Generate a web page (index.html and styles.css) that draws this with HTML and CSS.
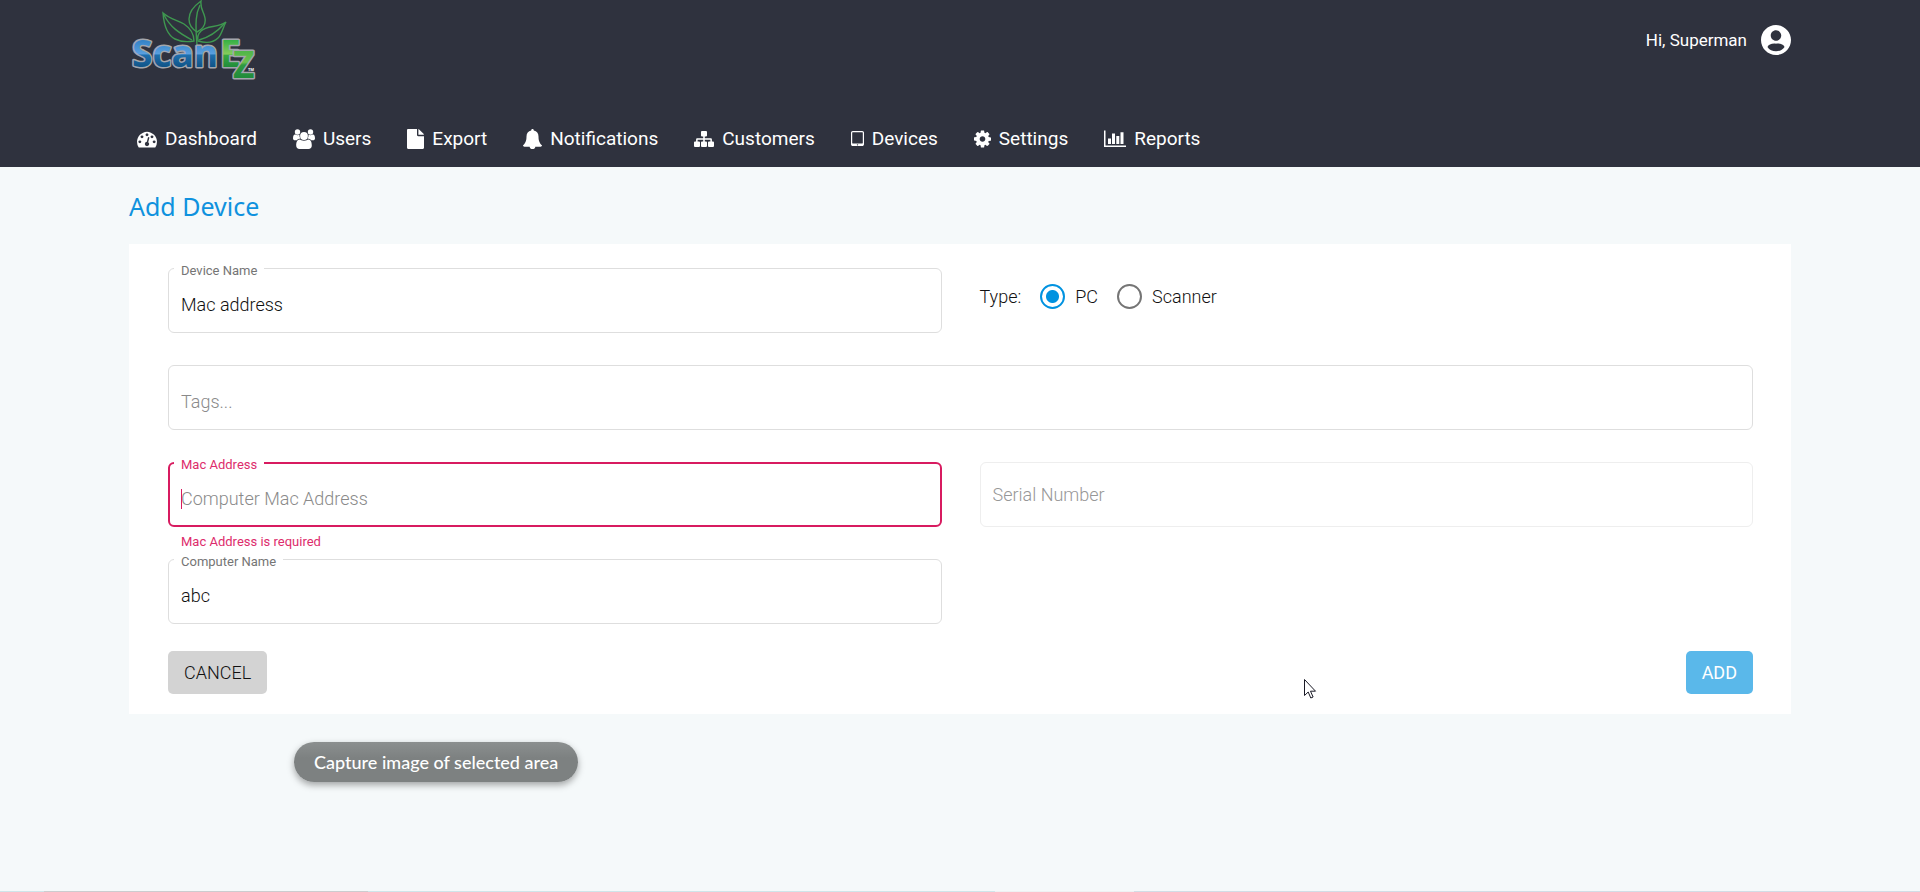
FILE: index.html
```html
<!DOCTYPE html>
<html lang="en">
<head>
<meta charset="utf-8">
<meta name="viewport" content="width=device-width, initial-scale=1">
<title>Add Device</title>
<link rel="stylesheet" href="styles.css">
</head>
<body>
<header class="header">
  <div class="topbar">
    <a class="logo" href="#" aria-label="ScanEz">
      <svg width="180" height="100" viewBox="0 0 180 100">
        <defs>
          <linearGradient id="blue" gradientUnits="userSpaceOnUse" x1="0" y1="39" x2="0" y2="69">
            <stop offset="0" stop-color="#2f7fc4"/><stop offset=".5" stop-color="#5aa0e0"/><stop offset=".53" stop-color="#1f6fae"/><stop offset="1" stop-color="#0d4f80"/>
          </linearGradient>
          <linearGradient id="green" gradientUnits="userSpaceOnUse" x1="0" y1="40" x2="0" y2="68">
            <stop offset="0" stop-color="#35b044"/><stop offset=".5" stop-color="#86cc5c"/><stop offset=".55" stop-color="#37a840"/><stop offset="1" stop-color="#1f8a3a"/>
          </linearGradient>
          <linearGradient id="greenz" gradientUnits="userSpaceOnUse" x1="0" y1="51" x2="0" y2="79">
            <stop offset="0" stop-color="#4fb548"/><stop offset=".4" stop-color="#6cc04e"/><stop offset=".5" stop-color="#2f9a40"/><stop offset="1" stop-color="#1f8a3a"/>
          </linearGradient>
        </defs>
        <g class="leaf">
          <path d="M91 1C84 6 79 12 79 19c0 6 3 10 8 13 6-3 9-8 8-14-1-6-5-9-4-17z"/>
          <path d="M90 5c-4 8-5 17-3 40"/>
          <path d="M53 13c1 13 4 22 12 26 6 3 13 3 19 2 0-8-4-13-10-17-7-4-14-5-21-11z"/>
          <path d="M54 15c6 12 15 18 28 25"/>
          <path d="M116 22c-8 6-19 3-25 9-3 3-4 6-3 10 7 2 15 2 20-3 4-4 5-11 8-16z"/>
          <path d="M114 24c-7 8-14 13-25 16"/>
        </g>
        <g class="word">
          <text class="scan" x="22" y="67">Scan</text>
          <text class="e" x="110" y="67">E</text>
          <text class="z" x="123" y="78">Z</text>
        </g>
        <text class="tm" x="138" y="71">TM</text>
      </svg>
    </a>
    <a class="account" href="#">
      <span>Hi, Superman</span>
      <svg width="36" height="36" viewBox="0 0 24 24" fill="#fff"><path d="M12 2C6.480 2 2 6.480 2 12s4.480 10 10 10 10-4.480 10-10S17.520 2 12 2zm0 3.500c1.930 0 3.500 1.570 3.500 3.500s-1.570 3.500-3.500 3.500S8.500 10.930 8.500 9 10.070 5.500 12 5.500zm0 14c-2.300 0-4.500-1-5.700-2.900.5-1.500 3.200-2.500 5.700-2.100 2.500-.4 5.200.6 5.700 2.100-1.200 1.900-3.400 2.900-5.700 2.900z"/></svg>
    </a>
  </div>
  <nav class="nav">
    <a href="#"><svg width="20" height="20" viewBox="0 0 1792 1792"><path d="M384 1152q0-53-37.500-90.500t-90.500-37.500-90.500 37.500-37.500 90.500 37.500 90.500 90.500 37.500 90.500-37.500 37.500-90.500zm192-448q0-53-37.500-90.500t-90.500-37.500-90.500 37.500-37.500 90.500 37.500 90.500 90.500 37.500 90.500-37.500 37.500-90.500zm428 481l101-382q6-26-7.500-48.500t-38.500-29.500-48 6.500-30 39.500l-101 382q-60 5-107 43.500t-63 98.500q-20 77 20 146t117 89 146-20 89-117q16-60-6-117t-72-91zm660-33q0-53-37.500-90.500t-90.500-37.500-90.500 37.500-37.500 90.500 37.500 90.500 90.500 37.500 90.500-37.500 37.500-90.500zm-640-640q0-53-37.500-90.500t-90.500-37.500-90.500 37.500-37.500 90.500 37.500 90.500 90.500 37.500 90.500-37.500 37.500-90.500zm448 192q0-53-37.500-90.500t-90.500-37.500-90.500 37.500-37.500 90.500 37.500 90.500 90.500 37.500 90.500-37.500 37.500-90.500zm320 448q0 261-141 483-19 29-54 29h-1402q-35 0-54-29-141-221-141-483 0-182 71-348t191-286 286-191 348-71 348 71 286 191 191 286 71 348z"/></svg>Dashboard</a>
    <a href="#"><svg width="22" height="20" viewBox="0 0 22 20"><circle cx="4.500" cy="3" r="2.700"/><circle cx="17.500" cy="3" r="2.700"/><path d="M0 9.500C0 7 .8 5.600 2 5.600c.8 0 1.300.6 2.500.6.8 0 1.400-.2 2-.5-.2 1.500.2 2.700 1 3.800-1.600.1-2.800.7-3.700 1.800H2.200C.8 11.300 0 10.700 0 9.500zM22 9.500c0-2.500-.8-3.900-2-3.900-.8 0-1.300.6-2.500.6-.8 0-1.400-.2-2-.5.2 1.500-.2 2.700-1 3.800 1.600.1 2.800.7 3.700 1.800h1.600c1.400 0 2.200-.6 2.200-1.800z"/><circle cx="11" cy="7" r="3.900"/><path d="M6.600 10.400c1.200 0 2 1.300 4.400 1.300s3.200-1.300 4.400-1.300c2.600 0 3.400 3.200 3.400 6 0 2.300-1.300 3.500-3.300 3.500h-9c-2 0-3.300-1.200-3.300-3.500 0-2.800.8-6 3.400-6z"/></svg>Users</a>
    <a href="#"><svg width="17" height="20" viewBox="0 0 17 20"><path d="M10 0v6c0 .7.500 1.200 1.200 1.200H17v11.600c0 .7-.5 1.200-1.200 1.200H1.200C.5 20 0 19.500 0 18.800V1.200C0 .5.500 0 1.200 0zM11.400.1c.4.100.8.300 1 .6l3.900 3.900c.3.300.5.700.6 1.200h-5.500z"/></svg>Export</a>
    <a href="#"><svg width="19" height="20" viewBox="0 0 19 20"><path d="M9.500 0c.8 0 1.400.6 1.300 1.500 3 .6 4.700 3 4.700 5.900 0 4.800 1.500 7.200 3.500 8.900 0 .8-.6 1.400-1.400 1.400h-5.300c0 1.400-1.200 2.300-2.800 2.300s-2.800-.9-2.800-2.300H1.400C.6 17.700 0 17.100 0 16.300c2-1.700 3.500-4.100 3.500-8.900 0-2.900 1.700-5.300 4.700-5.900C8.100.6 8.700 0 9.500 0z"/></svg>Notifications</a>
    <a href="#"><svg width="20" height="20" viewBox="0 0 20 20"><path d="M7.900 2h4.200c.5 0 .9.400.9.900v3.600c0 .5-.4.900-.9.900h-1.300V9.300h5.800c.8 0 1.300.5 1.300 1.300v1.900h1.200c.5 0 .9.400.9.900V17c0 .5-.4.900-.9.900h-4.200c-.5 0-.9-.4-.9-.9v-3.600c0-.5.4-.9.900-.9h1.500v-1.800h-5.600v1.800h1.300c.5 0 .9.400.9.900V17c0 .5-.4.900-.9.900H7.900c-.5 0-.9-.4-.9-.9v-3.600c0-.5.4-.9.900-.9h1.300v-1.800H3.600v1.800h1.500c.5 0 .9.400.9.900V17c0 .5-.4.900-.9.900H.9c-.5 0-.9-.4-.9-.9v-3.600c0-.5.4-.9.900-.9h1.200v-1.900c0-.8.500-1.300 1.300-1.300h5.800V7.400H7.900c-.5 0-.9-.4-.9-.9V2.900c0-.5.400-.9.900-.9z"/></svg>Customers</a>
    <a href="#"><svg width="13" height="20" viewBox="0 0 13 20"><path fill-rule="evenodd" d="M1.800 2h9.400c1 0 1.800.8 1.800 1.800v11.400c0 1-.8 1.800-1.800 1.800H1.800c-1 0-1.800-.8-1.800-1.800V3.800C0 2.800.8 2 1.800 2zm-.1 1.300c-.3 0-.5.200-.5.500v10.300c0 .3.200.5.500.5h9.600c.3 0 .5-.2.500-.5V3.800c0-.3-.2-.5-.5-.5zM6.500 15.200c-.4 0-.7.300-.7.600s.3.600.7.600.7-.3.700-.6-.3-.6-.7-.6z"/></svg>Devices</a>
    <a href="#"><svg width="17" height="20" viewBox="128 0 1536 1792"><path d="M1152 896q0-106-75-181t-181-75-181 75-75 181 75 181 181 75 181-75 75-181zm512-109v222q0 12-8 23t-20 13l-185 28q-19 54-39 91 35 50 107 138 10 12 10 25t-9 23q-27 37-99 108t-94 71q-12 0-26-9l-138-108q-44 23-91 38-16 136-29 186-7 28-36 28h-222q-14 0-24.500-8.500t-11.500-21.500l-28-184q-49-16-90-37l-141 107q-10 9-25 9-14 0-25-11-126-114-165-168-7-10-7-23 0-12 8-23 15-21 51-66.500t54-70.500q-27-50-41-99l-183-27q-13-2-21-12.500t-8-23.500v-222q0-12 8-23t19-13l186-28q14-46 39-92-40-57-107-138-10-12-10-24 0-10 9-23 26-36 98.500-107.500t94.500-71.500q13 0 26 10l138 107q44-23 91-38 16-136 29-186 7-28 36-28h222q14 0 24.500 8.500t11.500 21.500l28 184q49 16 90 37l142-107q9-9 24-9 13 0 25 10 129 119 165 170 7 8 7 22 0 12-8 23-15 21-51 66.500t-54 70.500q26 50 41 98l183 28q13 2 21 12.500t8 23.500z"/></svg>Settings</a>
    <a href="#"><svg width="22" height="20" viewBox="0 0 22 20"><path d="M0 1.500h1.500v15H22V18H0zM4 9.500h3V15H4zM8 4.500h3V15H8zM12.300 7h3v8h-3zM16.500 3.300h3V15h-3z"/></svg>Reports</a>
  </nav>
</header>

<main class="page">
  <h1 class="title">Add Device</h1>
  <form class="panel">
    <div class="fields">
      <div class="field">
        <div class="box">
          <label class="label" for="device-name">Device Name</label>
          <input class="input" id="device-name" type="text" value="Mac address">
        </div>
      </div>
      <div class="types" role="radiogroup" aria-labelledby="type-label">
        <span id="type-label">Type:</span>
        <label class="type"><input class="radio" type="radio" name="type" checked>PC</label>
        <label class="type"><input class="radio" type="radio" name="type">Scanner</label>
      </div>
      <div class="field field-wide">
        <div class="box">
          <input class="input" type="text" placeholder="Tags..." aria-label="Tags">
        </div>
      </div>
      <div class="field field-error">
        <div class="box">
          <label class="label" for="mac">Mac Address</label>
          <input class="input" id="mac" type="text" placeholder="Computer Mac Address" aria-describedby="mac-error">
          <span class="caret"></span>
        </div>
        <p class="helper" id="mac-error">Mac Address is required</p>
      </div>
      <div class="field field-disabled">
        <div class="box">
          <input class="input" type="text" placeholder="Serial Number" aria-label="Serial Number" disabled>
        </div>
      </div>
      <div class="field field-last">
        <div class="box">
          <label class="label" for="computer-name">Computer Name</label>
          <input class="input" id="computer-name" type="text" value="abc">
        </div>
      </div>
    </div>
    <div class="actions">
      <button class="btn btn-cancel" type="button">CANCEL</button>
      <button class="btn btn-add" type="button">ADD</button>
    </div>
  </form>
</main>

<div class="toast" role="status">Capture image of selected area</div>
<svg class="pointer" width="13" height="20" viewBox="0 0 13 20"><path d="M.5.500v16l3.700-3.500 2.600 6 2.300-1-2.600-5.800h5z" fill="#fff" stroke="#1a1a26"/></svg>
<div class="edge"><span class="edge-a"></span><span class="edge-b"></span><span class="edge-c"></span><span class="edge-d"></span><span class="edge-e"></span></div>
</body>
</html>
```

FILE: styles.css
```css
* {
  box-sizing: border-box;
}

body {
  margin: 0;
  min-height: 100vh;
  overflow: hidden;
  background: #f5f9fa;
  color: #212121;
  font-family: Roboto, "Liberation Sans", sans-serif;
  font-size: 18px;
}

a {
  color: inherit;
  text-decoration: none;
}

.header {
  padding: 0 129px;
  background: #2f323e;
  color: #fff;
}

.topbar {
  display: flex;
  justify-content: space-between;
  align-items: flex-start;
  height: 110px;
}

.logo {
  margin-left: -19px;
}

.logo svg {
  display: block;
}

.leaf path {
  fill: none;
  stroke: #3f9850;
  stroke-width: 1.400;
}

.word text {
  font-family: "Open Sans", "Noto Sans", sans-serif;
  font-size: 37px;
  font-weight: 700;
  paint-order: stroke;
  stroke: #a3a6ad;
  stroke-width: 3;
  stroke-linejoin: round;
}

.scan {
  fill: url(#blue);
}

.e {
  fill: url(#green);
}

.z {
  fill: url(#greenz);
}

.tm {
  font-family: "Open Sans", sans-serif;
  font-size: 4px;
  font-weight: 700;
  fill: #fff;
}

.account {
  display: flex;
  align-items: center;
  gap: 11px;
  height: 80px;
  margin-right: -3px;
  font-size: 17px;
}

.nav {
  display: flex;
  align-items: center;
  gap: 36px;
  height: 57px;
  padding-left: 8px;
  font-size: 19px;
}

.nav a {
  display: flex;
  align-items: center;
  gap: 8px;
}

.nav svg {
  fill: #fff;
}

.page {
  padding: 0 129px;
}

.title {
  margin: 0;
  padding-top: 2px;
  color: #0f92de;
  font-family: "Noto Sans", "Open Sans", sans-serif;
  font-size: 25px;
  font-weight: 400;
  line-height: 75px;
}

.panel {
  padding: 24px 38px 20px 39px;
  background: #fff;
  font-size: 18px;
  font-weight: 300;
}

.fields {
  display: grid;
  grid-template-columns: 1fr 1fr;
  column-gap: 38px;
}

.field {
  display: grid;
  grid-template-rows: 65px 32px;
}

.field-wide {
  grid-column: 1 / -1;
}

.field-last {
  grid-template-rows: 65px 27px;
}

.box {
  position: relative;
  display: grid;
}

.label {
  position: absolute;
  top: -6px;
  left: 6px;
  padding: 0 7px;
  background: #fff;
  color: #757575;
  font-size: 13px;
  font-weight: 400;
  line-height: 18px;
}

.input {
  width: 100%;
  padding: 8px 12px 0;
  border: 1px solid #dedede;
  border-radius: 6px;
  background: none;
  color: #111;
  font: inherit;
  outline: none;
}

.input::placeholder {
  color: #8a8a8a;
  opacity: 1;
}

.field-error .input {
  padding: 8px 11px 0;
  border: 2px solid #d81b60;
}

.field-error .label,
.helper {
  color: #dd2c6c;
}

.helper {
  margin: 0;
  padding-left: 13px;
  font-size: 13px;
  font-weight: 400;
  line-height: 29px;
}

.caret {
  position: absolute;
  top: 27px;
  left: 13px;
  width: 1px;
  height: 20px;
  background: #d81b60;
}

.field-disabled .input {
  padding-top: 0;
  border-color: #eee;
}

.field-disabled .input::placeholder {
  color: #979797;
}

.types {
  display: flex;
  align-items: center;
  gap: 19px;
  height: 56px;
  color: #111;
}

.type {
  display: flex;
  align-items: center;
  gap: 10px;
}

.radio {
  appearance: none;
  width: 25px;
  height: 25px;
  margin: 0;
  border: 2px solid #757575;
  border-radius: 50%;
}

.radio:checked {
  border-color: #0092e0;
  background: radial-gradient(circle, #0092e0 6px, #fff 7px);
}

.actions {
  display: flex;
  justify-content: space-between;
}

.btn {
  height: 43px;
  padding: 0 16px;
  border: 0;
  border-radius: 5px;
  font: inherit;
}

.btn-cancel {
  background: #d3d3d3;
  color: #111;
}

.btn-add {
  background: #5ab8ea;
  color: #fff;
  font-weight: 400;
}

.toast {
  position: absolute;
  top: 742px;
  left: 294px;
  padding: 0 20px;
  border-radius: 20px;
  background: linear-gradient(#8b8f8f, #7d8181 40%);
  box-shadow: 0 3px 7px rgba(0, 0, 0, .35);
  color: #fff;
  font-family: Lato, sans-serif;
  font-size: 18px;
  font-weight: 500;
  line-height: 40px;
}

.pointer {
  position: absolute;
  top: 679px;
  left: 1304px;
}

.edge {
  position: fixed;
  right: 0;
  bottom: 0;
  left: 0;
  display: grid;
  grid-template-columns: 44fr 324fr 627fr 139fr 786fr;
  height: 1px;
}

.edge-a,
.edge-c {
  background: #cfe5ea;
}

.edge-b {
  background: #cccccf;
}

.edge-d {
  background: #eef1f3;
}

.edge-e {
  background: #d2dde6;
}
```
